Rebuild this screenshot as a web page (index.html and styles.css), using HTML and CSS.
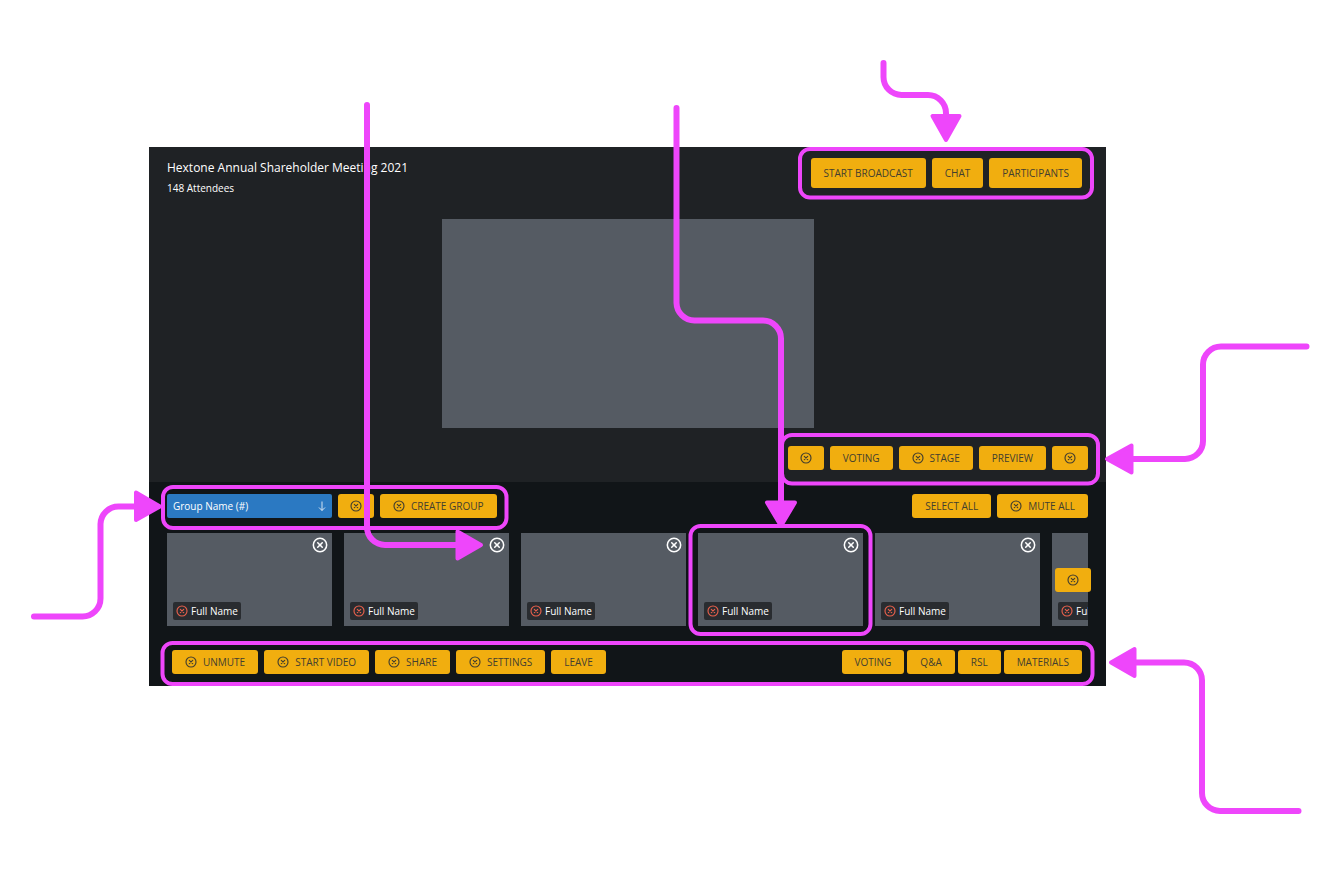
FILE: index.html
```html
<!DOCTYPE html>
<html lang="en">
<head>
<meta charset="utf-8">
<meta name="viewport" content="width=device-width, initial-scale=1">
<title>Hextone Annual Shareholder Meeting 2021</title>
<link rel="stylesheet" href="styles.css">
</head>
<body>
<svg width="0" height="0" class="defs" aria-hidden="true">
  <symbol id="x" viewBox="0 0 12 12">
    <circle cx="6" cy="6" r="5" fill="none" stroke="currentColor" stroke-width="1.15"/>
    <path d="M4.3 4.3l3.4 3.4M7.700 4.3L4.3 7.700" fill="none" stroke="currentColor" stroke-width="1.15" stroke-linecap="round"/>
  </symbol>
</svg>
<main class="app">
  <section class="upper">
    <header class="header">
      <div>
        <h1 class="title">Hextone Annual Shareholder Meeting 2021</h1>
        <p class="attendees">148 Attendees</p>
      </div>
      <div class="row">
        <button class="btn tall">START BROADCAST</button>
        <button class="btn tall">CHAT</button>
        <button class="btn tall">PARTICIPANTS</button>
      </div>
    </header>
    <div class="stage"></div>
    <div class="row end">
      <button class="btn square" aria-label="Previous"><svg class="icon"><use href="#x"/></svg></button>
      <button class="btn">VOTING</button>
      <button class="btn"><svg class="icon"><use href="#x"/></svg>STAGE</button>
      <button class="btn">PREVIEW</button>
      <button class="btn square" aria-label="Next"><svg class="icon"><use href="#x"/></svg></button>
    </div>
  </section>
  <section class="lower">
    <div class="row between">
      <div class="row">
        <div class="picker">
          <select class="select" aria-label="Group"><option>Group Name (#)</option></select>
          <svg class="arrow" viewBox="0 0 10 10"><path d="M5 .5v9M2 6.500l3 3 3-3" fill="none" stroke="currentColor" stroke-width=".8"/></svg>
        </div>
        <button class="btn square" aria-label="Edit group"><svg class="icon"><use href="#x"/></svg></button>
        <button class="btn"><svg class="icon"><use href="#x"/></svg>CREATE GROUP</button>
      </div>
      <div class="row">
        <button class="btn">SELECT ALL</button>
        <button class="btn"><svg class="icon"><use href="#x"/></svg>MUTE ALL</button>
      </div>
    </div>
    <div class="carousel">
      <div class="tiles">
        <article class="tile"><button class="close" aria-label="Remove"><svg class="big"><use href="#x"/></svg></button><span class="name"><svg class="icon red"><use href="#x"/></svg>Full Name</span></article>
        <article class="tile"><button class="close" aria-label="Remove"><svg class="big"><use href="#x"/></svg></button><span class="name"><svg class="icon red"><use href="#x"/></svg>Full Name</span></article>
        <article class="tile"><button class="close" aria-label="Remove"><svg class="big"><use href="#x"/></svg></button><span class="name"><svg class="icon red"><use href="#x"/></svg>Full Name</span></article>
        <article class="tile"><button class="close" aria-label="Remove"><svg class="big"><use href="#x"/></svg></button><span class="name"><svg class="icon red"><use href="#x"/></svg>Full Name</span></article>
        <article class="tile"><button class="close" aria-label="Remove"><svg class="big"><use href="#x"/></svg></button><span class="name"><svg class="icon red"><use href="#x"/></svg>Full Name</span></article>
        <article class="tile"><button class="close" aria-label="Remove"><svg class="big"><use href="#x"/></svg></button><span class="name"><svg class="icon red"><use href="#x"/></svg>Full Name</span></article>
      </div>
      <button class="btn square more" aria-label="More"><svg class="icon"><use href="#x"/></svg></button>
    </div>
    <footer class="row between footer">
      <div class="row">
        <button class="btn"><svg class="icon"><use href="#x"/></svg>UNMUTE</button>
        <button class="btn"><svg class="icon"><use href="#x"/></svg>START VIDEO</button>
        <button class="btn"><svg class="icon"><use href="#x"/></svg>SHARE</button>
        <button class="btn"><svg class="icon"><use href="#x"/></svg>SETTINGS</button>
        <button class="btn">LEAVE</button>
      </div>
      <div class="row tight">
        <button class="btn">VOTING</button>
        <button class="btn">Q&amp;A</button>
        <button class="btn">RSL</button>
        <button class="btn">MATERIALS</button>
      </div>
    </footer>
  </section>
</main>
<svg class="notes" width="1341" height="874" viewBox="0 0 1341 874" aria-hidden="true">
  <g class="frames">
    <rect x="800" y="149" width="292" height="48.500" rx="10"/>
    <rect x="782" y="435" width="316" height="48.500" rx="10"/>
    <rect x="163" y="487" width="343.500" height="41" rx="10"/>
    <rect x="690.500" y="526" width="180" height="108" rx="10"/>
    <rect x="162.500" y="643" width="930" height="41" rx="10"/>
  </g>
  <g class="lines">
    <path d="M883.500 63V77A18 18 0 0 0 901.500 95H928A18 18 0 0 1 946 113V118"/>
    <path d="M367 105V527A18 18 0 0 0 385 545H458"/>
    <path d="M676.500 108V303A18 18 0 0 0 694.500 320.500H763A18 18 0 0 1 781 338.500V504"/>
    <path d="M1306.500 346.500H1221A18 18 0 0 0 1203 364.500V441A18 18 0 0 1 1185 459H1130"/>
    <path d="M34 616.500H82A18 18 0 0 0 100.500 598.500V524A18 18 0 0 1 118.500 506.500H137"/>
    <path d="M1298.500 811H1220A18 18 0 0 1 1202 793V681A18 18 0 0 0 1184 662.500H1134"/>
  </g>
  <g class="heads">
    <path d="M932.500 116H959.500L946 140Z"/>
    <path d="M457.500 531.500V558.500L481 545Z"/>
    <path d="M767 502.500H795L781 526Z"/>
    <path d="M1131.500 445.500V472.500L1107 459Z"/>
    <path d="M136 492.500V520L160 506.500Z"/>
    <path d="M1134.500 649V676L1111 662.500Z"/>
  </g>
</svg>
</body>
</html>
```

FILE: styles.css
```css
* { box-sizing: border-box; }

body {
  margin: 0;
  padding: 147px 235px 0 149px;
  background: #fff;
  font-family: "Open Sans", sans-serif;
  color: #fff;
}

.defs { position: absolute; }
.app { background: #111518; }

.upper {
  padding: 11px 18px 12px;
  background: #1f2225;
}

.header {
  display: flex;
  justify-content: space-between;
  align-items: flex-start;
  padding-right: 6px;
}

.title {
  margin: 0;
  font-size: 12px;
  font-weight: 400;
  line-height: 20px;
}

.attendees {
  margin: 0;
  font-size: 10px;
  line-height: 20px;
}

.stage {
  width: 372px;
  max-width: 100%;
  height: 209px;
  margin: 21px auto 18px;
  background: #555b63;
}

.row {
  display: flex;
  gap: 6px;
}
.end { justify-content: flex-end; }
.between { justify-content: space-between; }
.tight { gap: 3px; }

.btn {
  display: flex;
  align-items: center;
  justify-content: center;
  gap: 6px;
  height: 24px;
  padding: 0 13px;
  border: 0;
  border-radius: 3px;
  background: #f1ae0f;
  color: #433e2f;
  font: 10px/16px "Open Sans", sans-serif;
  white-space: nowrap;
}
.tall { height: 30px; }
.square {
  width: 36px;
  padding: 0;
}

.icon {
  width: 12px;
  height: 12px;
  flex: none;
}
.red { color: #e8604c; }

.lower { padding: 12px 18px; }

.picker {
  position: relative;
  display: flex;
  width: 165px;
}

.select {
  width: 100%;
  height: 24px;
  padding: 0 6px;
  border: 0;
  border-radius: 2px;
  appearance: none;
  background: #2b79c2;
  color: #fff;
  font: 10px/16px "Open Sans", sans-serif;
}

.arrow {
  position: absolute;
  top: 7px;
  right: 5px;
  width: 10px;
  height: 10px;
}

.carousel {
  position: relative;
  margin: 15px 0 24px;
}

.tiles {
  display: flex;
  gap: 12px;
  overflow: hidden;
}

.tile {
  display: flex;
  flex: none;
  flex-direction: column;
  justify-content: space-between;
  align-items: flex-start;
  width: 165px;
  height: 93px;
  padding: 4px 4px 6px 6px;
  background: #555b63;
}

.close {
  display: flex;
  align-self: flex-end;
  padding: 0;
  border: 0;
  background: none;
  color: #fff;
}

.big {
  width: 16px;
  height: 16px;
}

.name {
  display: flex;
  align-items: center;
  gap: 3px;
  height: 18px;
  padding: 0 3px;
  border-radius: 2px;
  background: #292c30;
  font-size: 10px;
  line-height: 18px;
  white-space: nowrap;
}

.more {
  position: absolute;
  top: 35px;
  right: -3px;
}

.footer { padding: 0 6px 0 5px; }

.notes {
  position: absolute;
  top: 0;
  left: 0;
  pointer-events: none;
}
.frames { fill: none; stroke: #ee46fb; stroke-width: 4; }
.lines { fill: none; stroke: #ee46fb; stroke-width: 6; stroke-linecap: round; }
.heads { fill: #ee46fb; stroke: #ee46fb; stroke-width: 4; stroke-linejoin: round; }
```
